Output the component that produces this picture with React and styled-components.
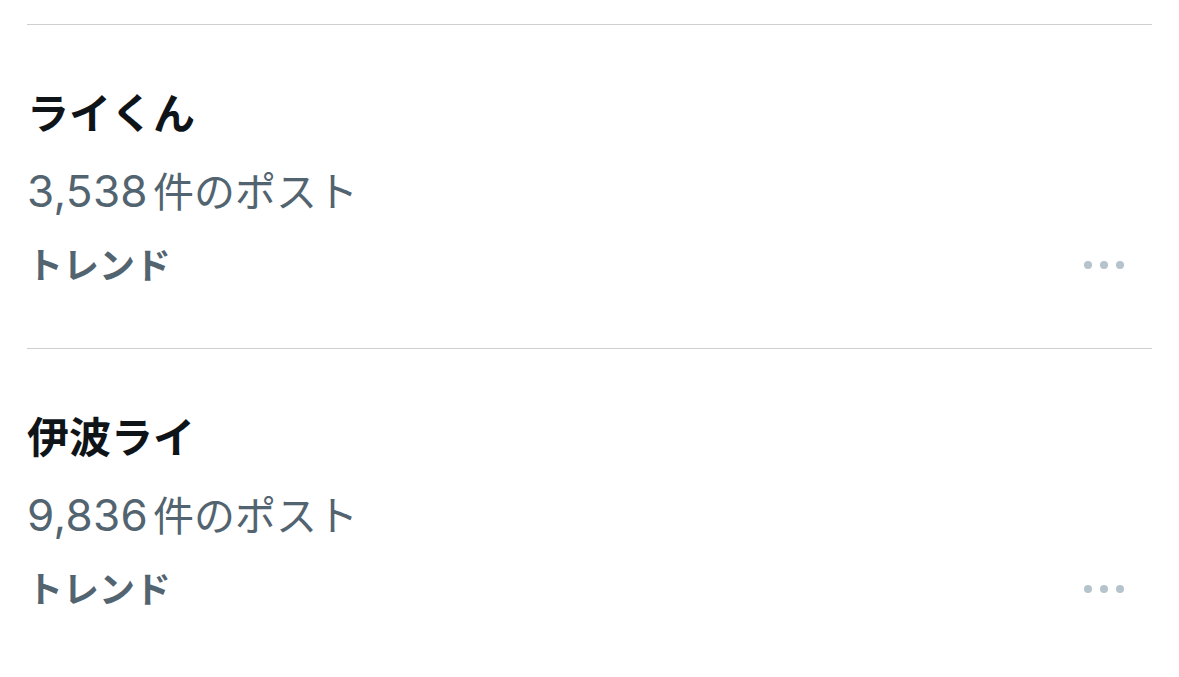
import styled, {createGlobalStyle} from "styled-components";

const GlobalStyle = createGlobalStyle`
  html, body {
    margin: 0;
    padding: 0;
    background: #ffffff;
  }
  body {
    font-family: "Noto Sans CJK JP", "Noto Sans", sans-serif;
  }
`;

const Page = styled.div`
  width: 1179px;
  height: 677px;
  padding: 24px 27px 0 27px;
  box-sizing: border-box;
  background: #ffffff;
  overflow: hidden;
`;

const Item = styled.div`
  border-top: 1px solid #cfcfcf;
  padding: 56px 0 55px 0;
  display: flex;
  flex-direction: column;
`;

const Title = styled.div`
  font-size: 42px;
  font-weight: 700;
  line-height: 60px;
  height: 60px;
  color: #0f1419;
`;

const Count = styled.div`
  margin-top: 18px;
  height: 60px;
  font-size: 41px;
  font-weight: 400;
  line-height: 60px;
  color: #536471;
`;

const Num = styled.span`
  font-family: "Inter", "Liberation Sans", sans-serif;
  font-size: 44px;
  line-height: 1;
  letter-spacing: 0.3px;
  margin-right: 5px;
`;

const Footer = styled.div`
  margin-top: 14px;
  display: flex;
  align-items: center;
  justify-content: space-between;
  height: 60px;
`;

const Label = styled.span`
  font-size: 36px;
  font-weight: 700;
  line-height: 60px;
  color: #536471;
`;

const More = styled.button`
  border: none;
  background: none;
  padding: 0;
  margin: 4px 28px 0 0;
  display: flex;
  gap: 8px;
  cursor: pointer;
`;

const Dot = styled.span`
  width: 8px;
  height: 8px;
  border-radius: 50%;
  background: #b4c3cc;
`;

const trends = [
    {title: "ライくん", posts: "3,538"},
    {title: "伊波ライ", posts: "9,836"},
];

const App = () => {
    return (
        <>
            <GlobalStyle/>
            <Page>
                {trends.map((t) => (
                    <Item key={t.title}>
                        <Title>{t.title}</Title>
                        <Count><Num>{t.posts}</Num>件のポスト</Count>
                        <Footer>
                            <Label>トレンド</Label>
                            <More aria-label="その他">
                                <Dot/><Dot/><Dot/>
                            </More>
                        </Footer>
                    </Item>
                ))}
            </Page>
        </>
    );
};

export default App;
